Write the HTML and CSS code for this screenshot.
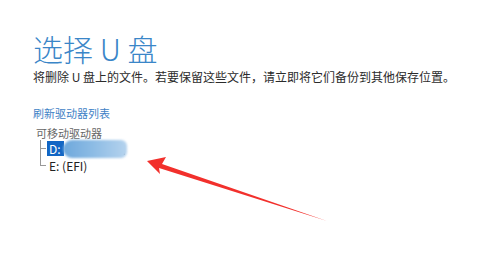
FILE: index.html
```html
<!DOCTYPE html>
<html lang="zh-CN">
<head>
    <meta charset="UTF-8">
    <meta name="viewport" content="width=device-width, initial-scale=1.0">
    <title>选择 U 盘</title>
    <link rel="stylesheet" href="styles.css">
</head>
<body>

    <!-- 选择 U 盘 -->
    <div class="page">
        <h1 class="title">选择 U 盘</h1>
        <p class="note">将删除 U 盘上的文件。若要保留这些文件，请立即将它们备份到其他保存位置。</p>

        <a class="refresh" href="#">刷新驱动器列表</a>

        <div class="tree">
            <div class="tree-root">可移动驱动器</div>
            <ul class="tree-list">
                <li class="tree-item">
                    <span class="drive selected">D:</span><span class="blur"></span><span class="grip"></span>
                </li>
                <li class="tree-item">
                    <span class="drive">E: (EFI)</span>
                </li>
            </ul>
        </div>
    </div>

    <!-- red annotation arrow -->
    <svg class="arrow" width="486" height="279" viewBox="0 0 486 279">
        <polygon points="147,161 166,157 162,164 327,221 159,168 160,174" fill="#f2302c"/>
    </svg>

</body>
</html>
```

FILE: styles.css
```css
body {
    font-family: "Noto Sans CJK SC", "Noto Sans", sans-serif;
    margin: 0;
    padding: 0;
    background-color: #fff;
    color: #333;
}
.page {
    padding: 27px 0 0 33px;
}
.title {
    margin: 0;
    font-size: 30px;
    font-weight: 300;
    line-height: 42px;
    color: #3a86c8;
}
.note {
    margin: 0;
    font-size: 12px;
    line-height: 16px;
    color: #2b2b2b;
}
.refresh {
    display: inline-block;
    margin-top: 20px;
    font-size: 11px;
    line-height: 16px;
    color: #3f82c6;
    text-decoration: none;
}
.tree {
    margin-top: 3px;
    padding-left: 3px;
    font-size: 11px;
}
.tree-root {
    line-height: 14px;
    color: #666;
}
.tree-list {
    list-style-type: none;
    margin: 0;
    padding: 0 0 0 4px;
}
/* vertical + horizontal connector lines drawn as backgrounds */
.tree-item {
    display: flex;
    align-items: center;
    height: 17px;
    padding-left: 7px;
    background:
        linear-gradient(#999, #999) 0 50% / 6px 1px no-repeat,
        linear-gradient(#999, #999) 0 0 / 1px 100% no-repeat;
}
.tree-item:last-child {
    background:
        linear-gradient(#999, #999) 0 50% / 6px 1px no-repeat,
        linear-gradient(#999, #999) 0 0 / 1px 50% no-repeat;
}
.drive {
    font-size: 12px;
    line-height: 14px;
    color: #222;
    padding: 0 2px;
}
.selected {
    background-color: #1266c4;
    color: #fff;
    line-height: 15px;
    padding: 0 3px 0 2px;
}
.blur {
    width: 64px;
    height: 18px;
    border-radius: 9px 6px 6px 9px;
    background: linear-gradient(90deg, #6ea8dc, #8fbde5 50%, #b5d3ee);
    filter: blur(1px);
    margin-left: -1px;
}
.grip {
    width: 2px;
    height: 2px;
    background-color: #555;
    align-self: flex-end;
    margin: 0 0 2px -4px;
}
.arrow {
    position: absolute;
    left: 0;
    top: 0;
}
```
